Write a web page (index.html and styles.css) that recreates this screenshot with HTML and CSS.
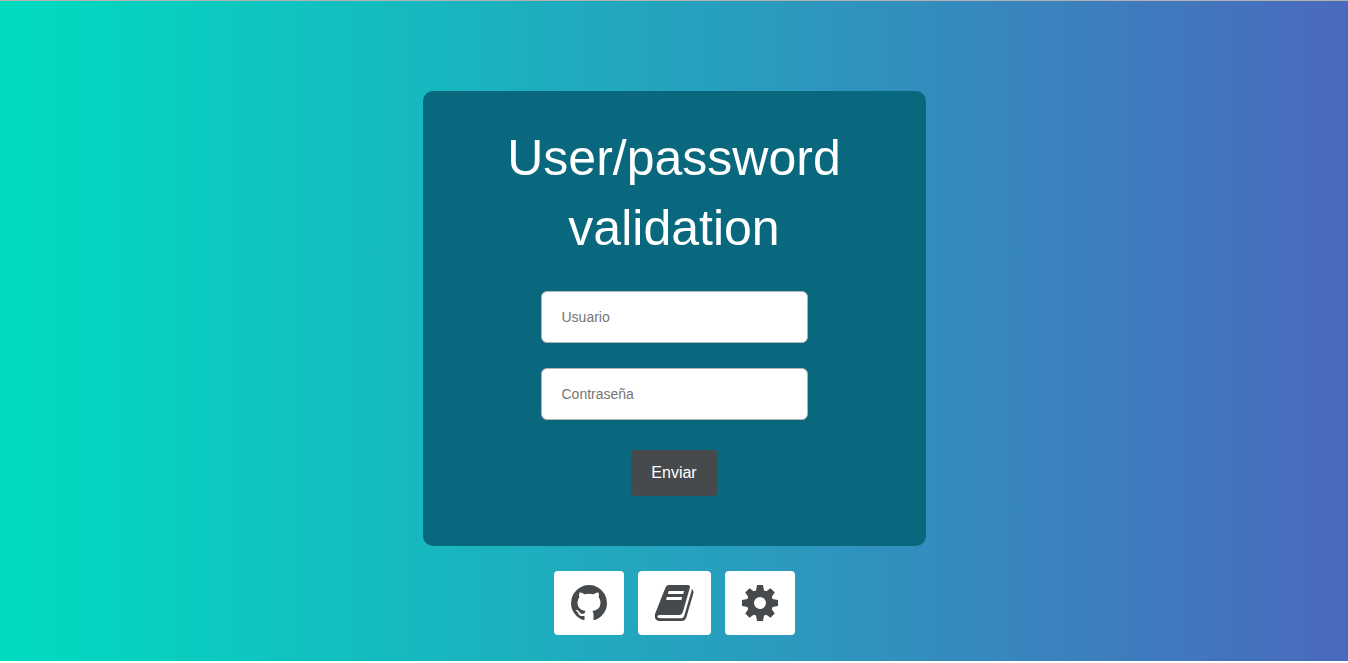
FILE: index.html
```html
<!DOCTYPE html>
<html lang="es">
<head>
<meta charset="utf-8">
<meta name="viewport" content="width=device-width, initial-scale=1">
<title>User/password validation</title>
<link rel="stylesheet" href="styles.css">
</head>
<body>
<main class="page">
  <form class="card">
    <h1 class="title">User/password validation</h1>
    <input class="field" type="text" placeholder="Usuario" aria-label="Usuario">
    <input class="field" type="password" placeholder="Contraseña" aria-label="Contraseña">
    <button class="submit" type="submit">Enviar</button>
  </form>
  <nav class="links">
    <a class="link" href="#github" aria-label="GitHub">
      <svg class="icon" viewBox="0 0 1792 1792"><path d="M896 128q209 0 385.5 103t279.5 279.5 103 385.5q0 251-146.5 451.5t-378.5 277.5q-27 5-40-7t-13-30q0-3 .5-76.5t.5-134.5q0-97-52-142 57-6 102.5-18t94-39 81-66.5 53-105 20.5-150.5q0-119-79-206 37-91-8-204-28-9-81 11t-92 44l-38 24q-93-26-192-26t-192 26q-16-11-42.5-27t-83.5-38.5-85-13.5q-45 113-8 204-79 87-79 206 0 85 20.5 150t52.5 105 80.5 67 94 39 102.5 18q-39 36-49 103-21 10-45 15t-57 5-65.5-21.5-55.5-62.5q-19-32-48.5-52t-49.5-24l-20-3q-21 0-29 4.5t-5 11.5 9 14 13 12l7 5q22 10 43.5 38t31.5 51l10 23q13 38 44 61.5t67 30 69.5 7 55.5-3.5l23-4q0 38 .5 88.5t.5 54.5q0 18-13 30t-40 7q-232-77-378.5-277.5t-146.5-451.5q0-209 103-385.5t279.5-279.5 385.5-103z"/></svg>
    </a>
    <a class="link link-wide" href="#docs" aria-label="Documentación">
      <svg class="icon" viewBox="0 0 42 42"><path fill-rule="evenodd" d="M15.5 3H34.5Q37.8 3 36.8 6L30 29.5Q29 33 26 33H6.5Q4.5 33 4.3 34.5Q4.8 36.3 7 36.3H28Q30.5 36.3 31.3 33.5L38.5 9Q38.8 8 38.5 7Q41.3 8.5 40.3 11.5L33.5 35Q32.3 39 28.5 39H7Q1.5 39 1.8 33Q2 31.5 3 29.5L12.5 5.5Q13.3 3 15.5 3ZM15.7 9L14.9 12H30.2L31 9ZM13.9 15L13.1 18H28.4L29.2 15Z"/></svg>
    </a>
    <a class="link" href="#settings" aria-label="Ajustes">
      <svg class="icon" viewBox="0 0 42 42"><path fill-rule="evenodd" d="M17 8.4L18 3H24L25 8.4L27.3 9.2L31.5 6.2L35.8 10.5L32.8 14.7L33.6 17L39 18V24L33.6 25L32.8 27.3L35.8 31.5L31.5 35.8L27.3 32.8L25 33.6L24 39H18L17 33.6L14.7 32.8L10.5 35.8L6.2 31.5L9.2 27.3L8.4 25L3 24V18L8.4 17L9.2 14.7L6.2 10.5L10.5 6.2L14.7 9.2ZM21 15A6 6 0 1 0 21 27A6 6 0 1 0 21 15Z"/></svg>
    </a>
  </nav>
</main>
</body>
</html>
```
FILE: styles.css
```css
* {
  box-sizing: border-box;
}

body {
  margin: 0;
  background: #fff;
  font-family: "Liberation Sans", Arial, sans-serif;
}

.page {
  display: flex;
  flex-direction: column;
  align-items: center;
  gap: 25px;
  min-height: calc(100vh - 2px);
  padding: 90px 16px 26px;
  border-top: 1px solid #b2b2b2;
  background: linear-gradient(to right, #00dcc0, #4a69bd);
}

.card {
  display: flex;
  flex-direction: column;
  align-items: center;
  width: 100%;
  max-width: 503px;
  padding: 32px 50px 50px;
  border-radius: 10px;
  background: #0a687e;
}

.title {
  margin: 0 0 28px;
  color: #fff;
  font-size: 50px;
  font-weight: 400;
  line-height: 70px;
  text-align: center;
}

.field {
  width: 100%;
  max-width: 267px;
  height: 52px;
  margin-bottom: 25px;
  padding: 0 20px;
  border: 1px solid #b2b2b2;
  border-radius: 6px;
  background: #fff;
  color: #474a4d;
  font: 14px "Liberation Sans", Arial, sans-serif;
}

.field::placeholder {
  color: #757575;
}

.submit {
  margin-top: 5px;
  padding: 14px 20px;
  border: 0;
  border-radius: 3px;
  background: #474a4d;
  color: #fff;
  font: 16px/18px "Liberation Sans", Arial, sans-serif;
}

.links {
  display: flex;
  gap: 14px;
}

.link {
  display: flex;
  align-items: center;
  justify-content: center;
  width: 70px;
  height: 64px;
  border-radius: 4px;
  background: #fff;
  color: #474a4d;
}

.link-wide {
  width: 73px;
}

.icon {
  width: 42px;
  height: 42px;
  fill: currentColor;
}
```
